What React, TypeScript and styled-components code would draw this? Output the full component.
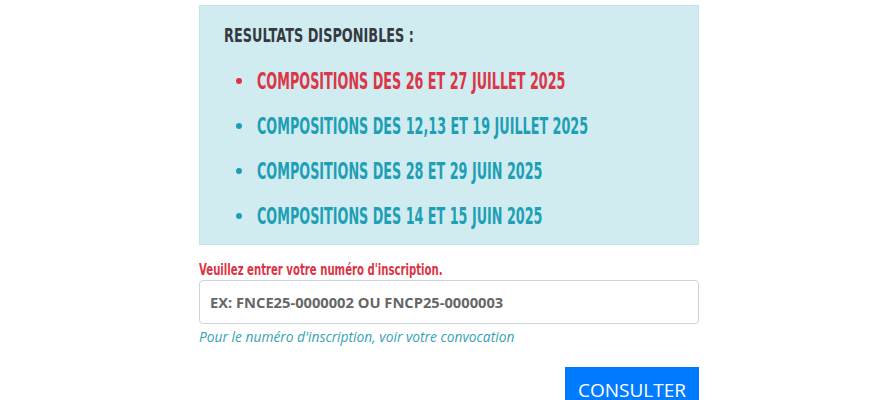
import React from "react";
import styled, { createGlobalStyle } from "styled-components";

const Global = createGlobalStyle`
  html, body { margin: 0; padding: 0; background: #fff; }
  body { font-family: "Open Sans", "Liberation Sans", sans-serif; }
`;

const Page = styled.div`
  padding: 5px 0 0 199px;
  width: 500px;
`;

const Alert = styled.div`
  background: #d1ecf1;
  border: 1px solid #bee5eb;
  padding: 13px 20px 6px 24px;
`;

/* Condensed display text: squeezed horizontally to mimic a narrow font */
const Narrow = styled.span<{ $sx: number }>`
  display: inline-block;
  white-space: nowrap;
  font-family: "DejaVu Sans", sans-serif;
  font-weight: 700;
  transform: scaleX(${(p) => p.$sx});
  transform-origin: left center;
`;

const Title = styled.h4`
  margin: 0 0 7px 0;
  font-size: 20px;
  line-height: 32px;
  color: #343a40;
`;

const List = styled.ul`
  margin: 0;
  padding: 0 0 0 12px;
  list-style: none;
`;

const Item = styled.li<{ $active?: boolean }>`
  display: flex;
  align-items: center;
  gap: 15px;
  height: 45px;
  font-size: 23px;
  color: ${(p) => (p.$active ? "#dc3545" : "#1d9fb5")};
  &::before {
    content: "";
    width: 6px;
    height: 6px;
    border-radius: 50%;
    background: currentColor;
    flex: none;
  }
`;

const Form = styled.div`
  margin-top: 14px;
  display: flex;
  flex-direction: column;
`;

const Label = styled.label`
  font-size: 16px;
  color: #dc3545;
  line-height: 20px;
`;

const Input = styled.input`
  margin-top: 0;
  box-sizing: border-box;
  width: 500px;
  height: 44px;
  border: 1px solid #ced4da;
  border-radius: 4px;
  padding: 0 10px;
  font-family: "Open Sans", sans-serif;
  font-weight: 700;
  font-size: 14.7px;
  color: #666;
  outline: none;
`;

const Help = styled.small`
  margin-top: 3px;
  font-family: "Open Sans", sans-serif;
  font-style: italic;
  font-size: 13.8px;
  color: #35a3b6;
  line-height: 20px;
`;

const Actions = styled.div`
  display: flex;
  justify-content: flex-end;
  margin-top: 20px;
`;

const Button = styled.button`
  background: #007bff;
  color: #fff;
  border: none;
  width: 134px;
  height: 46px;
  font-family: "Open Sans", sans-serif;
  font-size: 19px;
  padding: 0;
`;

const items = [
  "COMPOSITIONS DES 26 ET 27 JUILLET 2025",
  "COMPOSITIONS DES 12,13 ET 19 JUILLET 2025",
  "COMPOSITIONS DES 28 ET 29 JUIN 2025",
  "COMPOSITIONS DES 14 ET 15 JUIN 2025",
];

export default function App() {
  return (
    <>
      <Global />
      <Page>
        <Alert>
          <Title>
            <Narrow $sx={0.643}>RESULTATS DISPONIBLES :</Narrow>
          </Title>
          <List>
            {items.map((t, i) => (
              <Item key={t} $active={i === 0}>
                <Narrow $sx={0.555}>{t}</Narrow>
              </Item>
            ))}
          </List>
        </Alert>
        <Form>
          <Label>
            <Narrow $sx={0.633}>Veuillez entrer votre numéro d'inscription.</Narrow>
          </Label>
          <Input defaultValue="EX: FNCE25-0000002 OU FNCP25-0000003" />
          <Help>Pour le numéro d'inscription, voir votre convocation</Help>
          <Actions>
            <Button>CONSULTER</Button>
          </Actions>
        </Form>
      </Page>
    </>
  );
}
